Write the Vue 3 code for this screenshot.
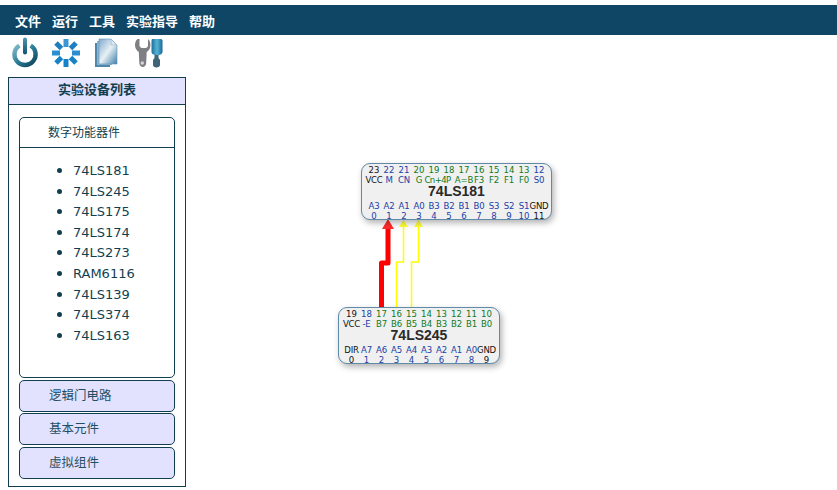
<template>
  <div class="page">
    <div class="menu-bar">
      <span v-for="m in menus" :key="m" class="menu-item">{{ m }}</span>
    </div>
    <div class="tool-bar">
      <svg class="tool power" width="30" height="32" viewBox="0 0 30 32">
        <defs>
          <linearGradient id="pw" x1="0" y1="0" x2="1" y2="1">
            <stop offset="0" stop-color="#86bccb" />
            <stop offset="0.5" stop-color="#2b7d98" />
            <stop offset="1" stop-color="#0d3f58" />
          </linearGradient>
          <linearGradient id="st" x1="0" y1="0" x2="0" y2="1">
            <stop offset="0" stop-color="#4a9ab4" />
            <stop offset="1" stop-color="#12506e" />
          </linearGradient>
        </defs>
        <path d="M9.300 8.500a10.600 10.600 0 1 0 11.400 0" fill="none" stroke="url(#pw)" stroke-width="4.400" />
        <rect x="13" y="0.500" width="4" height="17" rx="2" fill="url(#st)" />
      </svg>
      <svg class="tool spin" width="30" height="30" viewBox="0 0 30 30">
        <g stroke-width="5">
          <path d="M15 1v8" stroke="#3a97d4" />
          <path d="M15 21v8" stroke="#1683c8" />
          <path d="M1 15h8" stroke="#2b8ecf" />
          <path d="M21 15h8" stroke="#2b8ecf" />
          <path d="M5 5l5.500 5.500" stroke="#1c7fc0" />
          <path d="M25 5l-5.500 5.500" stroke="#1c7fc0" />
          <path d="M5 25l5.500-5.500" stroke="#1683c8" />
          <path d="M25 25l-5.500-5.500" stroke="#1683c8" />
        </g>
      </svg>
      <svg class="tool docs" width="24" height="30" viewBox="0 0 24 30">
        <defs>
          <linearGradient id="dc" x1="0" y1="0" x2="1" y2="1">
            <stop offset="0" stop-color="#7fa9cf" />
            <stop offset="0.5" stop-color="#e8f0f5" />
            <stop offset="1" stop-color="#3f7fa8" />
          </linearGradient>
        </defs>
        <path d="M1 5h15v24H1z" fill="#4f86ab" />
        <path d="M3 3h15v24H3z" fill="#8fb4d0" />
        <path d="M5 1h12l6 6v19H5z" fill="url(#dc)" stroke="#5d92b8" stroke-width="0.600" />
        <path d="M17 1v6h6z" fill="#dbe7f0" stroke="#7fa5c2" stroke-width="0.500" />
      </svg>
      <svg class="tool tools" width="29" height="30" viewBox="0 0 29 30">
        <defs>
          <linearGradient id="dr" x1="0" y1="0" x2="1" y2="0">
            <stop offset="0" stop-color="#1e6f9c" />
            <stop offset="0.500" stop-color="#55b4d6" />
            <stop offset="1" stop-color="#1a6a96" />
          </linearGradient>
        </defs>
        <path d="M3.500 1C1 3 .4 7 1.500 10c.8 2 2.200 3 3.300 4l.5 11c.1 2.500 2 4 3.500 4s3.300-1.500 3.400-4l.5-11c1.300-1 2.600-2 3.300-4 1-3 .5-7-2-9v6.500c0 1-1 2-2 2.500H7.500c-1-.5-2-1.500-2-2.500V1z" fill="#7d7f82" />
        <circle cx="8.300" cy="25" r="1.700" fill="#d5d7d9" />
        <path d="M18 1h9c1 0 1.500 1 1.500 2v11c0 1.500-1.500 2.500-3 3h-5c-1.500-.5-3-1.500-3-3V3c0-1 .5-2 .5-2z" fill="url(#dr)" />
        <path d="M20.500 17h4v3l1.500 2v5c0 1.500-1.500 2.500-3.500 2.500S19 28.500 19 27v-5l1.500-2z" fill="#3f6477" />
      </svg>
    </div>
    <div class="main">
      <aside class="side-panel">
        <div class="panel-title">实验设备列表</div>
        <div class="panel-body">
          <div class="group-open">
            <div class="group-head">数字功能器件</div>
            <ul class="device-list">
              <li v-for="d in devices" :key="d">{{ d }}</li>
            </ul>
          </div>
          <div v-for="g in groups" :key="g" class="group-closed">{{ g }}</div>
        </div>
      </aside>
    </div>
    <div class="canvas">
      <svg class="wires" width="837" height="490" viewBox="0 0 837 490">
        <path d="M381.500 307V263H388V226" fill="none" stroke="#ff0000" stroke-width="5" stroke-linejoin="round" />
        <path d="M388 219l-6 10h12z" fill="#ff2a2a" />
        <path d="M396.500 307V262H403.500V224" fill="none" stroke="#ffff00" stroke-width="1.500" />
        <path d="M403.500 220l-4.500 7h9z" fill="#ffff33" />
        <path d="M411.500 307V262H418.500V224" fill="none" stroke="#ffff00" stroke-width="1.500" />
        <path d="M418.500 220l-4.500 7h9z" fill="#ffff33" />
      </svg>
      <div v-for="c in chips" :key="c.name" class="chip" :style="{ left: c.x + 'px', top: c.y + 'px', width: c.w + 'px' }">
        <div class="pin-row" :style="rowStyle(c)">
          <span v-for="p in c.top" :key="p.n" :class="p.c">{{ p.n }}</span>
        </div>
        <div class="pin-row labels" :style="rowStyle(c)">
          <span v-for="p in c.top" :key="p.n" :class="[p.c, { wide: p.l.length > 3 }]">{{ p.l }}</span>
        </div>
        <div class="chip-name">{{ c.name }}</div>
        <div class="pin-row labels low" :style="rowStyle(c)">
          <span v-for="p in c.bottom" :key="p.n" :class="p.c">{{ p.l }}</span>
        </div>
        <div class="pin-row" :style="rowStyle(c)">
          <span v-for="p in c.bottom" :key="p.n" :class="p.c">{{ p.n }}</span>
        </div>
      </div>
    </div>
  </div>
</template>

<script setup>
const menus = ['文件', '运行', '工具', '实验指导', '帮助']
const devices = ['74LS181', '74LS245', '74LS175', '74LS174', '74LS273', 'RAM6116', '74LS139', '74LS374', '74LS163']
const groups = ['逻辑门电路', '基本元件', '虚拟组件']

// 引脚颜色: k 电源, b 输入, g 输出
const pins = (labels, colors, start, step) =>
  labels.map((l, i) => ({ l, n: start + i * step, c: colors[i] }))

const chips = [
  {
    name: '74LS181',
    x: 361,
    y: 163,
    w: 191,
    top: pins(['VCC', 'M', 'CN', 'G', 'Cn+4P', '', 'A=B', 'F3', 'F2', 'F1', 'F0', 'S0'], 'kbbggggggggb', 23, -1),
    bottom: pins(['A3', 'A2', 'A1', 'A0', 'B3', 'B2', 'B1', 'B0', 'S3', 'S2', 'S1', 'GND'], 'bbbbbbbbbbbk', 0, 1)
  },
  {
    name: '74LS245',
    x: 338,
    y: 307,
    w: 162,
    top: pins(['VCC', '-E', 'B7', 'B6', 'B5', 'B4', 'B3', 'B2', 'B1', 'B0'], 'kbgggggggg', 19, -1),
    bottom: pins(['DIR', 'A7', 'A6', 'A5', 'A4', 'A3', 'A2', 'A1', 'A0', 'GND'], 'kbbbbbbbbk', 0, 1)
  }
]

const rowStyle = (c) => ({ gridTemplateColumns: `repeat(${c.top.length}, 15px)` })
</script>

<style scoped>
.page {
  position: relative;
  width: 837px;
  height: 490px;
  overflow: hidden;
  background: #fff;
  font-family: "Liberation Sans", "Noto Sans CJK SC", sans-serif;
  display: flex;
  flex-direction: column;
  padding-top: 5px;
  box-sizing: border-box;
}
.menu-bar {
  height: 30px;
  background: #0f4666;
  display: flex;
  align-items: center;
  padding-left: 15px;
  gap: 11px;
  flex-shrink: 0;
}
.menu-item {
  color: #fff;
  font-size: 13px;
  font-weight: 700;
  font-family: "Noto Sans CJK SC", sans-serif;
}
.tool-bar {
  height: 42px;
  display: flex;
  align-items: flex-start;
  padding: 2px 0 0 10px;
  box-sizing: border-box;
  flex-shrink: 0;
}
.tool {
  display: block;
}
.spin {
  margin-left: 11px;
  margin-top: 1px;
}
.docs {
  margin-left: 13px;
  margin-top: 1px;
}
.tools {
  margin-left: 16px;
  margin-top: 1px;
}
.main {
  flex: 1;
  display: flex;
  min-height: 0;
}
.side-panel {
  width: 178px;
  height: 410px;
  margin-left: 8px;
  border: 1px solid #123f50;
  box-sizing: border-box;
  display: flex;
  flex-direction: column;
}
.panel-title {
  height: 27px;
  background: #e2e2ff;
  border-bottom: 1px solid #123f50;
  box-sizing: border-box;
  text-align: center;
  line-height: 22px;
  font-size: 13px;
  font-weight: 700;
  color: #123f50;
  font-family: "Noto Sans CJK SC", sans-serif;
}
.panel-body {
  flex: 1;
  padding: 12px 10px 0;
  display: flex;
  flex-direction: column;
  gap: 1.400px;
}
.group-open {
  height: 261px;
  margin-bottom: 0.600px;
  border: 1px solid #123f50;
  border-radius: 5px;
  box-sizing: border-box;
  flex-shrink: 0;
}
.group-head {
  height: 30px;
  border-bottom: 1px solid #123f50;
  box-sizing: border-box;
  padding-left: 28px;
  line-height: 27px;
  font-size: 12px;
  color: #123f50;
  font-family: "Noto Sans CJK SC", sans-serif;
}
.device-list {
  margin: 0;
  padding: 12px 0 0 53px;
  color: #123f50;
  font-family: "DejaVu Sans", sans-serif;
  font-size: 13px;
  line-height: 20.600px;
}
.device-list li {
  height: 20.600px;
}
.device-list li::marker {
  font-family: "Liberation Sans", sans-serif;
  font-size: 16px;
}
.group-closed {
  height: 32px;
  background: #e2e2ff;
  border: 1px solid #123f50;
  border-radius: 5px;
  box-sizing: border-box;
  padding-left: 29px;
  line-height: 27px;
  font-size: 12.500px;
  color: #1f4f63;
  font-family: "Noto Sans CJK SC", sans-serif;
  flex-shrink: 0;
}
.canvas {
  position: absolute;
  left: 0;
  top: 0;
  width: 100%;
  height: 100%;
  pointer-events: none;
}
.wires {
  position: absolute;
  left: 0;
  top: 0;
}
.chip {
  position: absolute;
  height: 57px;
  box-sizing: border-box;
  background: #f0f0f0;
  border: 1px solid #5f8aa8;
  border-radius: 9px;
  box-shadow: 2px 3px 6px rgba(0, 0, 0, 0.3);
  padding-top: 1px;
}
.pin-row {
  display: grid;
  justify-content: center;
  text-align: center;
  white-space: nowrap;
  font-family: "DejaVu Sans Condensed", "DejaVu Sans", sans-serif;
  font-stretch: condensed;
  font-size: 9.500px;
  line-height: 10px;
}
.pin-row span {
  display: block;
  justify-self: center;
}
.labels {
  font-size: 9.500px;
  letter-spacing: -0.200px;
}
.pin-row .wide {
  justify-self: start;
  margin-left: -2px;
  letter-spacing: -0.600px;
}
.chip-name {
  text-align: center;
  font-size: 14px;
  font-weight: 700;
  line-height: 12px;
  color: #2a2a2a;
}
.low {
  margin-top: 4px;
}
.k {
  color: #111;
}
.b {
  color: #1a3fa8;
}
.g {
  color: #0f7a1a;
}
</style>
